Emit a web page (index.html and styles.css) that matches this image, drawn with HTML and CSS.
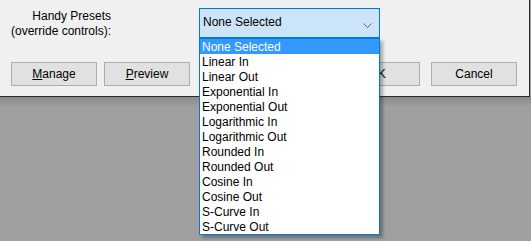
FILE: index.html
```html
<!DOCTYPE html>
<html lang="en">
<head>
<meta charset="UTF-8">
<title>Handy Presets</title>
<link rel="stylesheet" href="styles.css">
</head>
<body>

<div class="dialog">
  <div class="preset-row">
    <div class="preset-label">Handy Presets<br>(override controls):</div>
    <div class="combo">
      <span>None Selected</span>
      <svg class="chevron" width="9" height="5" viewBox="0 0 9 5">
        <path d="M0.5 0.5 L4.5 4.5 L8.5 0.5" fill="none" stroke="#606060" stroke-width="1"/>
      </svg>
    </div>
  </div>
  <div class="button-row">
    <button class="btn"><u>M</u>anage</button>
    <button class="btn"><u>P</u>review</button>
    <div class="spacer"></div>
    <button class="btn">OK</button>
    <button class="btn">Cancel</button>
  </div>
</div>
<div class="backdrop"></div>

<ul class="dropdown">
  <li class="selected">None Selected</li>
  <li>Linear In</li>
  <li>Linear Out</li>
  <li>Exponential In</li>
  <li>Exponential Out</li>
  <li>Logarithmic In</li>
  <li>Logarithmic Out</li>
  <li>Rounded In</li>
  <li>Rounded Out</li>
  <li>Cosine In</li>
  <li>Cosine Out</li>
  <li>S-Curve In</li>
  <li>S-Curve Out</li>
</ul>

</body>
</html>
```
FILE: styles.css
```css
body {
  margin: 0;
  background: #a0a0a0;
  font-family: "Liberation Sans", Arial, sans-serif;
  font-size: 12px;
  color: #000;
  height: 241px;
  overflow: hidden;
}
.dialog {
  width: 529px;
  height: 96px;
  background: #f0f0f0;
  border-right: 1px solid #2b2b2b;
  border-bottom: 1px solid #2b2b2b;
}
.preset-row {
  display: flex;
  padding-top: 8px;
}
.preset-label {
  width: 111px;
  text-align: right;
  line-height: 15px;
  padding-top: 1px;
}
.combo {
  margin-left: 88px;
  width: 181px;
  height: 30px;
  box-sizing: border-box;
  border: 1px solid #0078d7;
  background: #cce4f7;
  display: flex;
  justify-content: space-between;
  padding: 6px 7px 0 3px;
}
.chevron {
  margin-top: 8px;
}
.button-row {
  display: flex;
  padding: 0 12px 0 11px;
  margin-top: 23px;
}
.btn {
  width: 86px;
  height: 24px;
  background: #e1e1e1;
  border: 1px solid #adadad;
  font: inherit;
  padding: 0;
  margin-right: 7px;
}
.btn:last-child {
  margin-right: 0;
  margin-left: 4px;
}
.spacer {
  flex: 1;
}
.backdrop {
  height: 10px;
  background: linear-gradient(#8a8a8a, #a0a0a0);
}
.dropdown {
  position: absolute;
  left: 199px;
  top: 38px;
  width: 179px;
  margin: 0;
  padding: 0;
  list-style: none;
  background: #fff;
  border: 1px solid #0078d7;
  box-shadow: 3px 3px 3px rgba(0, 0, 0, 0.3);
}
.dropdown li {
  height: 15px;
  line-height: 16px;
  padding-left: 2px;
}
.dropdown li.selected {
  background: #3399ff;
  color: #fff;
}
```
